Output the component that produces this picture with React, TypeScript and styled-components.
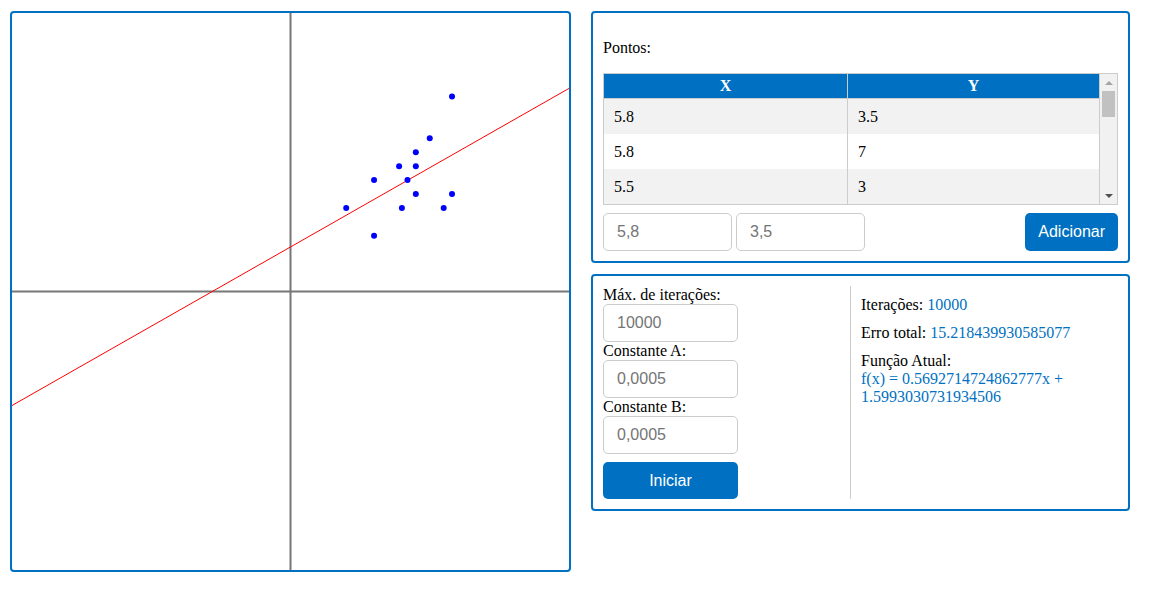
import React from 'react'
import styled, { createGlobalStyle } from 'styled-components'

const BLUE = '#0071c2'

type Point = { x: number; y: number }

const points: Point[] = [
  { x: 5.8, y: 3.5 },
  { x: 5.8, y: 7 },
  { x: 5.5, y: 3 },
  { x: 5, y: 5.5 },
  { x: 4.5, y: 5 },
  { x: 3.9, y: 4.5 },
  { x: 4.5, y: 4.5 },
  { x: 3, y: 4 },
  { x: 4.2, y: 4 },
  { x: 4.5, y: 3.5 },
  { x: 2, y: 3 },
  { x: 4, y: 3 },
  { x: 3, y: 2 },
]

const slope = 0.5692714724862777
const intercept = 1.5993030731934506

const SIZE = 557
const HALF = SIZE / 2
const SCALE = SIZE / 20

const toPx = (p: Point) => ({ cx: HALF + p.x * SCALE, cy: HALF - p.y * SCALE })

const GlobalStyle = createGlobalStyle`
  html, body {
    margin: 0;
    background: #fff;
    font-family: "Liberation Serif", "Times New Roman", serif;
    font-size: 16px;
    color: #000;
  }
`

const Page = styled.div`
  display: flex;
  align-items: flex-start;
  gap: 20px;
  padding: 11px 0 0 10px;
`

const CanvasBox = styled.div`
  width: ${SIZE}px;
  height: ${SIZE}px;
  border: 2px solid ${BLUE};
  border-radius: 4px;
  overflow: hidden;

  svg {
    display: block;
  }
`

const Sidebar = styled.div`
  width: 539px;
  display: flex;
  flex-direction: column;
  gap: 11px;
`

const Panel = styled.section`
  border: 2px solid ${BLUE};
  border-radius: 4px;
  padding: 10px;
`

const Title = styled.p`
  margin: 16px 0;
  line-height: 18px;
`

const TableFrame = styled.div`
  display: flex;
  border: 1px solid #ccc;
  height: 130px;
`

const Viewport = styled.div`
  flex: 1;
  overflow: hidden;
  border-right: 1px solid #ccc;
`

const Table = styled.table`
  width: 100%;
  border-collapse: collapse;
`

const Th = styled.th<{ $first?: boolean }>`
  background: ${BLUE};
  color: #fff;
  font-weight: bold;
  height: 24px;
  padding: 0;
  line-height: 18px;
  border-bottom: 1px solid #ccc;
  border-right: ${(p) => (p.$first ? '1px solid #ccc' : 'none')};
  width: ${(p) => (p.$first ? '49.2%' : 'auto')};
`

const Row = styled.tr<{ $striped: boolean }>`
  background: ${(p) => (p.$striped ? '#f2f2f2' : '#fff')};
`

const Td = styled.td<{ $first?: boolean }>`
  height: 35px;
  padding: 0 10px;
  line-height: 18px;
  border-right: ${(p) => (p.$first ? '1px solid #ccc' : 'none')};
`

const Rail = styled.div`
  width: 17px;
  background: #f1f1f1;
  display: flex;
  flex-direction: column;
`

const RailButton = styled.div<{ $dir: 'up' | 'down' }>`
  height: 17px;
  display: flex;
  align-items: center;
  justify-content: center;

  &::before {
    content: '';
    width: 0;
    height: 0;
    border-left: 4px solid transparent;
    border-right: 4px solid transparent;
    ${(p) =>
      p.$dir === 'up'
        ? 'border-bottom: 4px solid #a3a3a3;'
        : 'border-top: 4px solid #505050;'}
  }
`

const Thumb = styled.div`
  height: 26px;
  margin: 0 2px;
  background: #c1c1c1;
`

const RailSpace = styled.div`
  flex: 1;
`

const AddRow = styled.div`
  display: flex;
  align-items: center;
  gap: 4px;
  margin-top: 8px;
`

const Field = styled.input<{ $width: number }>`
  box-sizing: border-box;
  width: ${(p) => p.$width}px;
  height: 38px;
  padding: 0 13px;
  border: 1px solid #ccc;
  border-radius: 5px;
  font-family: "Liberation Sans", Arial, sans-serif;
  font-size: 16px;
  color: #000;
  outline: none;

  &::placeholder {
    color: #757575;
  }
`

const Button = styled.button<{ $width?: number }>`
  box-sizing: border-box;
  height: ${(p) => (p.$width ? 37 : 38)}px;
  width: ${(p) => (p.$width ? `${p.$width}px` : 'auto')};
  padding: 0 13px;
  border: none;
  border-radius: 5px;
  background: ${BLUE};
  color: #fff;
  font-family: "Liberation Sans", Arial, sans-serif;
  font-size: 16px;
`

const Push = styled.div`
  flex: 1;
`

const Split = styled.div`
  display: grid;
  grid-template-columns: 247px 1fr;
`

const Controls = styled.div`
  display: flex;
  flex-direction: column;
  align-items: flex-start;
`

const Label = styled.label`
  line-height: 18px;
`

const StartButton = styled(Button)`
  margin-top: 8px;
`

const Results = styled.div`
  border-left: 1px solid #ccc;
  padding-left: 10px;
`

const Line = styled.p`
  margin: 10px 0;
  line-height: 18px;
`

const Value = styled.span`
  color: ${BLUE};
`

function Chart() {
  const lx1 = -10
  const lx2 = 10
  const a = toPx({ x: lx1, y: slope * lx1 + intercept })
  const b = toPx({ x: lx2, y: slope * lx2 + intercept })
  return (
    <svg width={SIZE} height={SIZE} viewBox={`0 0 ${SIZE} ${SIZE}`}>
      <line x1={HALF} y1={0} x2={HALF} y2={SIZE} stroke='#777' strokeWidth={2} />
      <line x1={0} y1={HALF} x2={SIZE} y2={HALF} stroke='#777' strokeWidth={2} />
      <line x1={a.cx} y1={a.cy} x2={b.cx} y2={b.cy} stroke='#ff0000' strokeWidth={1} />
      {points.map((p, i) => {
        const c = toPx(p)
        return <circle key={i} cx={c.cx} cy={c.cy} r={3} fill='#0000ff' />
      })}
    </svg>
  )
}

export default function App() {
  return (
    <>
      <GlobalStyle />
      <Page>
        <CanvasBox>
          <Chart />
        </CanvasBox>
        <Sidebar>
          <Panel>
            <Title>Pontos:</Title>
            <TableFrame>
              <Viewport>
                <Table>
                  <thead>
                    <tr>
                      <Th $first>X</Th>
                      <Th>Y</Th>
                    </tr>
                  </thead>
                  <tbody>
                    {points.map((p, i) => (
                      <Row key={i} $striped={i % 2 === 0}>
                        <Td $first>{p.x}</Td>
                        <Td>{p.y}</Td>
                      </Row>
                    ))}
                  </tbody>
                </Table>
              </Viewport>
              <Rail>
                <RailButton $dir='up' />
                <Thumb />
                <RailSpace />
                <RailButton $dir='down' />
              </Rail>
            </TableFrame>
            <AddRow>
              <Field $width={129} placeholder='5,8' />
              <Field $width={129} placeholder='3,5' />
              <Push />
              <Button>Adicionar</Button>
            </AddRow>
          </Panel>
          <Panel>
            <Split>
              <Controls>
                <Label>Máx. de iterações:</Label>
                <Field $width={135} placeholder='10000' />
                <Label>Constante A:</Label>
                <Field $width={135} placeholder='0,0005' />
                <Label>Constante B:</Label>
                <Field $width={135} placeholder='0,0005' />
                <StartButton $width={135}>Iniciar</StartButton>
              </Controls>
              <Results>
                <Line>
                  Iterações: <Value>10000</Value>
                </Line>
                <Line>
                  Erro total: <Value>15.218439930585077</Value>
                </Line>
                <Line>
                  Função Atual:
                  <br />
                  <Value>
                    f(x) = {slope}x + {intercept}
                  </Value>
                </Line>
              </Results>
            </Split>
          </Panel>
        </Sidebar>
      </Page>
    </>
  )
}
